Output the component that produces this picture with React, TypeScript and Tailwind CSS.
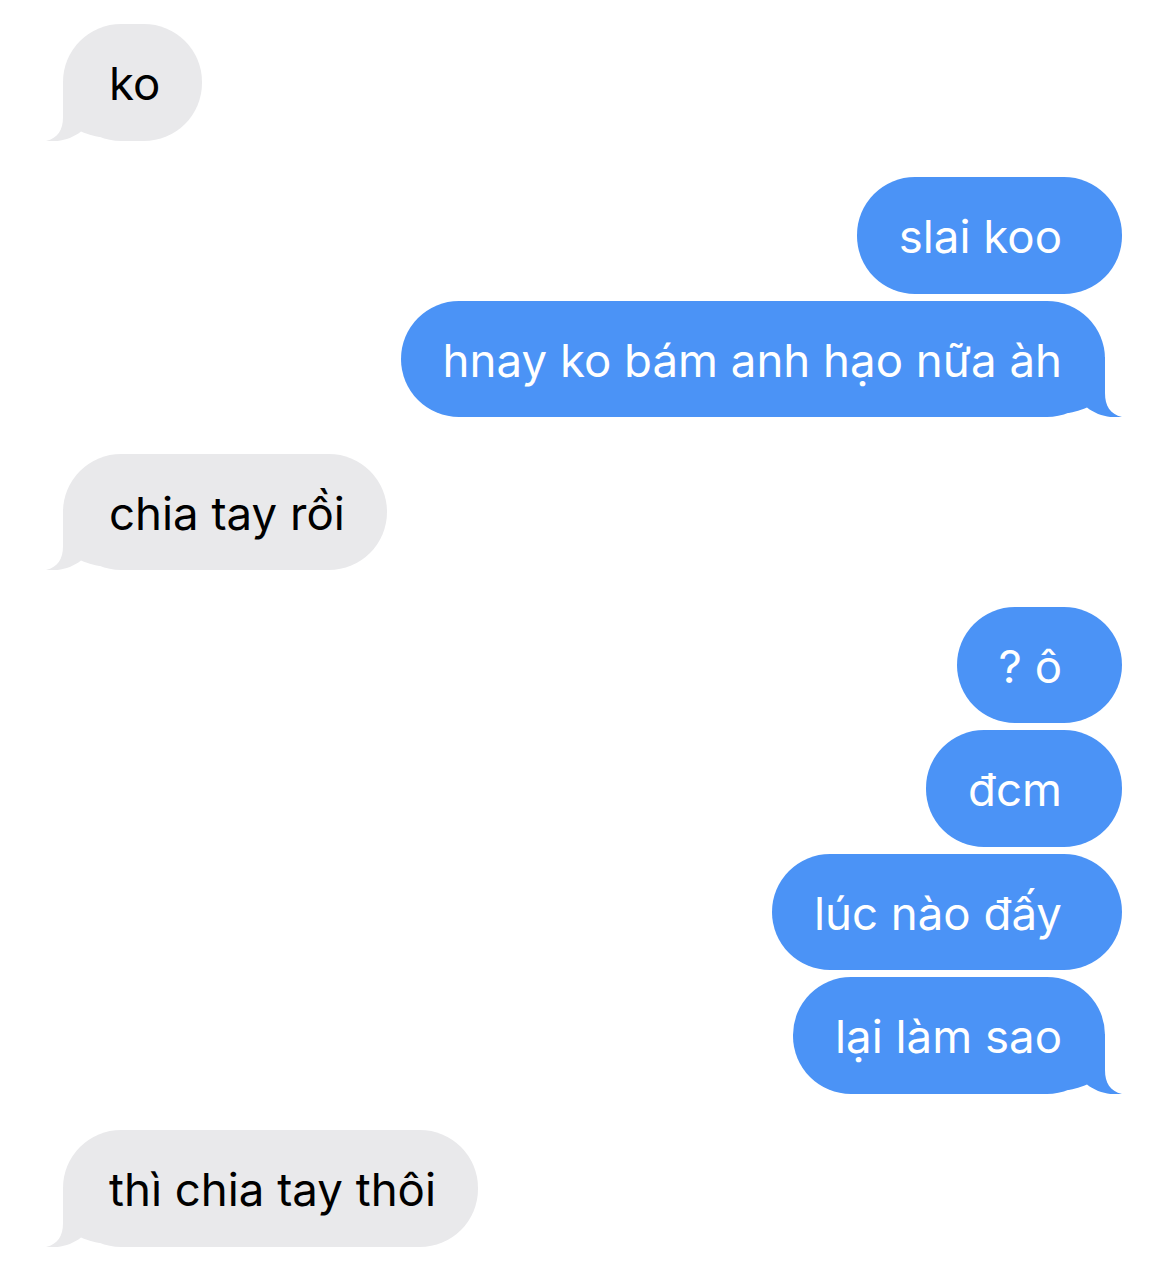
import React from "react";

type Msg = { text: string; tail?: boolean };

function Tail({ color, flip }: { color: string; flip?: boolean }) {
  return (
    <svg
      viewBox="0 0 57 60"
      className={
        "absolute bottom-0 w-[57px] h-[60px] " +
        (flip ? "left-[-17px] -scale-x-100" : "right-[-17px]")
      }
    >
      <path
        d="M0 0 L40 0 L40 36 C40 49 45 57 57 60 C46 61.5 32 58.5 22 50.5 C14 54 6 56 0 56 Z"
        fill={color}
      />
    </svg>
  );
}

function Received({ text, tail }: Msg) {
  return (
    <div className="flex justify-start">
      <div className="relative bg-[#e9e9eb] text-black rounded-[58px] h-[116.5px] pt-[4px] pl-[46px] pr-[42px] flex items-center">
        <span className="relative z-10">{text}</span>
        {tail && <Tail color="#e9e9eb" flip />}
      </div>
    </div>
  );
}

function Sent({ text, tail }: Msg) {
  return (
    <div className="flex justify-end">
      <div
        className={
          "relative bg-[#4b93f6] text-white rounded-[58px] h-[116.5px] pt-[4px] pl-[42px] flex items-center " +
          (tail ? "pr-[43px] mr-[17px]" : "pr-[60px]")
        }
      >
        <span className="relative z-10">{text}</span>
        {tail && <Tail color="#4b93f6" />}
      </div>
    </div>
  );
}

export default function App() {
  return (
    <div className="w-[1170px] h-[1265px] bg-white pl-[63px] pr-[48px] pt-[24px] font-['Inter','Noto_Sans',sans-serif] text-[45.6px] leading-none flex flex-col">
      <Received text="ko" tail />

      <div className="flex flex-col gap-[7px] mt-[36.5px]">
        <Sent text="slai koo" />
        <Sent text="hnay ko bám anh hạo nữa àh" tail />
      </div>

      <div className="mt-[36.5px]">
        <Received text="chia tay rồi" tail />
      </div>

      <div className="flex flex-col gap-[7px] mt-[36.5px]">
        <Sent text="? ô" />
        <Sent text="đcm" />
        <Sent text="lúc nào đấy" />
        <Sent text="lại làm sao" tail />
      </div>

      <div className="mt-[36.5px]">
        <Received text="thì chia tay thôi" tail />
      </div>
    </div>
  );
}
